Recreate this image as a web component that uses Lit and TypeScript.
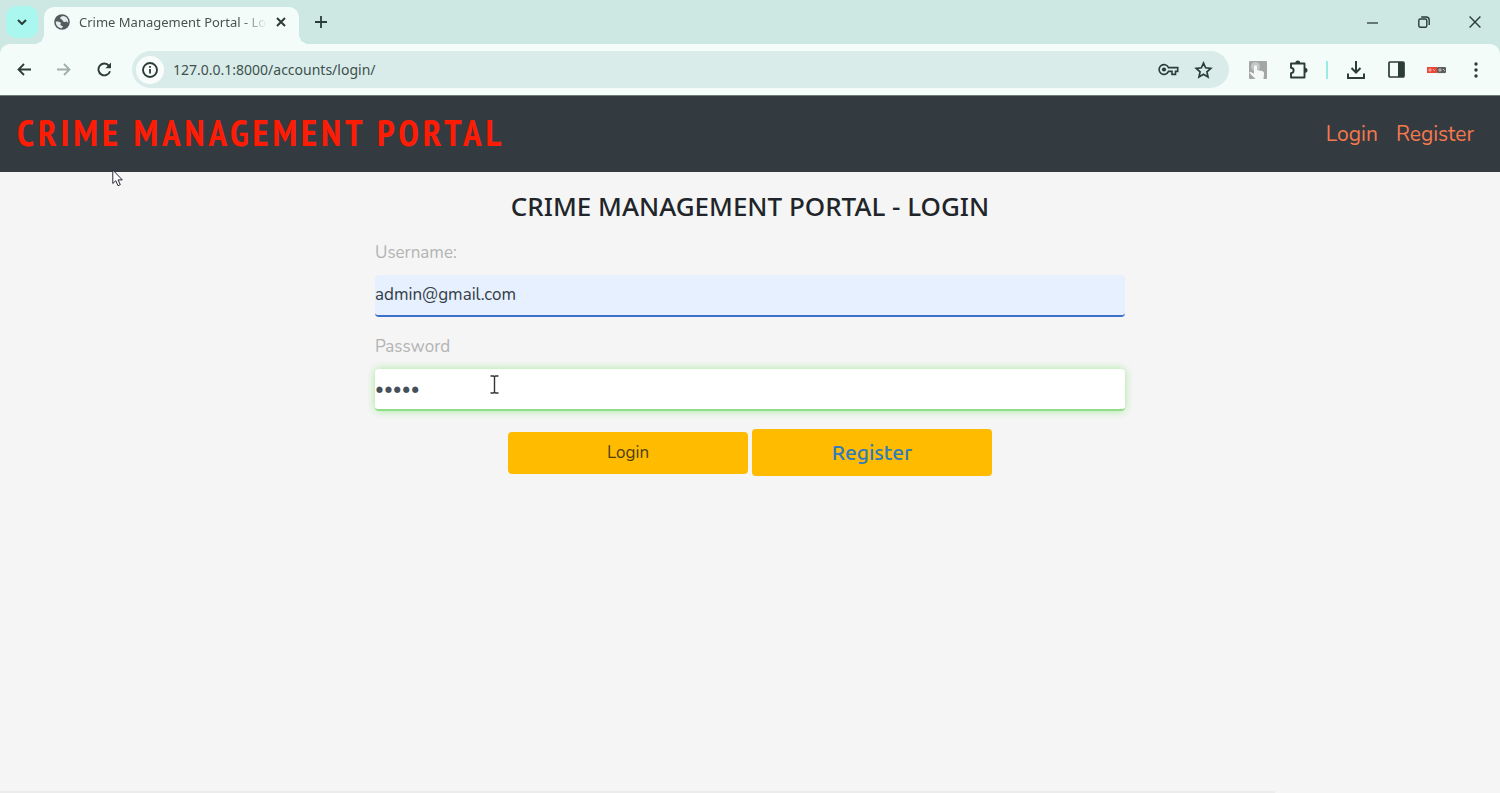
import { LitElement, html, css, svg } from "lit";
import { customElement } from "lit/decorators.js";

const icon = (w: number, h: number, body: unknown) => html`
  <svg width=${w} height=${h} viewBox="0 0 ${w} ${h}" fill="none" stroke="currentColor" stroke-width="2" aria-hidden="true">${body}</svg>`;

@customElement("browser-bar")
class BrowserBar extends LitElement {
  static styles = css`
    :host { display: block; background: #cde7e2; color: #2c3c39; font-family: "Noto Sans", sans-serif; }
    * { box-sizing: border-box; }
    button { border: 0; padding: 0; background: none; color: inherit; font: inherit; display: grid; place-items: center; flex: none; }
    svg { display: block; flex: none; }
    .strip { display: flex; align-items: center; height: 44px; padding: 0 14px 0 6px; }
    .search { width: 32px; height: 32px; border-radius: 10px; background: #a9f7ef; }
    .tab { position: relative; align-self: flex-end; display: flex; align-items: center; gap: 9px; width: 255px; height: 37px; margin-left: 6px; padding: 0 13px 7px 10px; background: #f4fcf9; border-radius: 10px 10px 0 0; }
    .tab::before, .tab::after { content: ""; position: absolute; bottom: 0; width: 10px; height: 10px; }
    .tab::before { left: -10px; background: radial-gradient(circle at 0 0, transparent 10px, #f4fcf9 10px); }
    .tab::after { right: -10px; background: radial-gradient(circle at 100% 0, transparent 10px, #f4fcf9 10px); }
    .title { flex: 1; min-width: 0; overflow: hidden; white-space: nowrap; color: #485351; font-size: 13px; line-height: 20px; mask-image: linear-gradient(90deg, #000 162px, transparent 188px); }
    .new { width: 24px; height: 24px; margin-left: 10px; }
    .window { display: flex; gap: 28px; margin-left: auto; }
    .window button { width: 23px; height: 24px; }
    .tools { display: flex; align-items: center; height: 51px; padding: 0 12px; gap: 16px; background: #f4fcf9; border-radius: 10px 10px 0 0; }
    .tools > button { width: 24px; height: 24px; }
    .dim { color: #a1afac; }
    .address { display: flex; align-items: center; flex: 1; height: 37px; margin-right: 1px; padding: 0 16px 0 4px; border-radius: 19px; background: #d9ecea; }
    .info { width: 28px; height: 28px; border-radius: 50%; background: #f8fdfc; }
    .url { flex: 1; min-width: 0; margin-left: 9px; padding: 0; border: 0; outline: 0; background: none; color: #40504d; font: 14px/20px "Noto Sans", sans-serif; }
    .key { margin-right: 15px; }
    .line { width: 2px; height: 18px; background: #98ece4; }
  `;
  render() {
    return html`
      <div class="strip">
        <button class="search" aria-label="Search tabs">${icon(10, 6, svg`<path d="M1 1l4 4 4-4"/>`)}</button>
        <div class="tab">
          ${icon(16, 16, svg`<circle cx="8" cy="8" r="7.8" fill="#535b5e" stroke="none"/><path d="M1.800 7.500c2.500 0 4.500.2 5 1.500.4 1-.8 1.200-.3 2 .5.9 2 .6 2.300 1.400.2.700-.5 1.200-1.300 1.800C4 14 1.500 11 1.800 7.500zM9 2c-1.500.5-3 1-2.800 2.200.2 1.100 1.600.7 2.200 1.700.5.9.8 2.200 2.200 2 1-.2 1.600-.8 2.400-.2.5.4.6 1.200 1.100 1.100C14.800 5.500 12.500 2.200 9 2z" fill="#e5edeb" stroke="none"/>`)}
          <span class="title">Crime Management Portal - Login</span>
          <button aria-label="Close tab">${icon(10, 10, svg`<path d="M1 1l8 8M9 1L1 9"/>`)}</button>
        </div>
        <button class="new" aria-label="New tab">${icon(12, 12, svg`<path d="M6 0v12M0 6h12" stroke-width="1.800"/>`)}</button>
        <div class="window">
          <button aria-label="Minimize">${icon(11, 11, svg`<path d="M0 6h11" stroke-width="1.300"/>`)}</button>
          <button aria-label="Restore">${icon(12, 12, svg`<rect x=".8" y="3" width="8" height="8.200" rx="1.500" stroke-width="1.400"/><path d="M3.200 1h5A3 3 0 0 1 11.200 4v5" stroke-width="1.400"/>`)}</button>
          <button aria-label="Close">${icon(12, 12, svg`<path d="M.6.6l10.800 10.800M11.400.6L.6 11.400" stroke-width="1.400"/>`)}</button>
        </div>
      </div>
      <div class="tools">
        <button aria-label="Back">${icon(14, 13, svg`<path d="M14 6.500H1.500M7 1L1.500 6.500 7 12" stroke-width="1.800"/>`)}</button>
        <button class="dim" aria-label="Forward">${icon(14, 13, svg`<path d="M0 6.500h12.500M7 1l5.500 5.500L7 12" stroke-width="1.800"/>`)}</button>
        <button aria-label="Reload">${icon(15, 15, svg`<path d="M12 3.800A5.900 5.900 0 1 0 13 9.200" stroke-width="1.900"/><path d="M14 .5v5.800H8.400z" fill="currentColor" stroke="none"/>`)}</button>
        <div class="address">
          <button class="info" aria-label="Site information">${icon(16, 16, svg`<circle cx="8" cy="8" r="7" stroke-width="1.900"/><path d="M8 7v4.500M8 4v1.800" stroke-width="1.800"/>`)}</button>
          <input class="url" aria-label="Address" value="127.0.0.1:8000/accounts/login/" />
          <button class="key" aria-label="Passwords">${icon(21, 13, svg`<path d="M10.500 4.600a4.900 4.900 0 1 0 0 3.800H14v3h3.500v-3h2.200V4.600z" stroke-width="1.600"/><circle cx="6" cy="6.500" r="2.100" fill="currentColor" stroke="none"/>`)}</button>
          <button aria-label="Bookmark">${icon(19, 18, svg`<path d="M9.500 2l2.100 4.800 5.200.5-3.900 3.500 1.100 5.100-4.500-2.700L5 15.900l1.100-5.100-3.900-3.500 5.200-.5z" stroke-width="1.700"/>`)}</button>
        </div>
        <button aria-label="Hand extension">${icon(18, 18, svg`<rect width="18" height="18" rx="1" fill="#a3a6a5" stroke="none"/><circle cx="6.500" cy="5.500" r="4.500" fill="#c3c8c6" stroke="none"/><path d="M0 11.500c2.500-.5 3.500.3 5 1.500V5.500c0-1.800 3-1.800 3 0V9l5 1c2 .5 2.300 1.500 2 3l-.5 5H6.500L3.500 15z" fill="#f4f7f6" stroke="none"/>`)}</button>
        <button aria-label="Extensions">${icon(19, 19, svg`<path d="M2 3.500h13.500V9v8.500H2v-4.300c3.500-.4 3.500-5 0-5.400z" stroke-width="1.900" stroke-linejoin="round"/><path d="M6.300 3a2.500 2.500 0 0 1 5 0zM16 7.800a2.500 2.500 0 0 1 0 5z" fill="currentColor" stroke="none"/>`)}</button>
        <span class="line"></span>
        <button aria-label="Downloads">${icon(18, 18, svg`<path d="M9 0v11.500M4.500 7L9 11.500 13.500 7M1 12.500V17h16v-4.500"/>`)}</button>
        <button aria-label="Side panel">${icon(17, 17, svg`<rect x="1" y="1" width="15" height="15" rx="1" stroke-width="1.700"/><path d="M10 1h6v15h-6z" fill="currentColor" stroke="none"/>`)}</button>
        <button aria-label="Profile">${icon(19, 8, svg`<rect width="10" height="6" y="1" fill="#ed4636" stroke="none"/><rect x="10" y="1" width="9" height="6" rx="1" fill="#58605f" stroke="none"/><path d="M2 3h2v2H2zM6 3l2 2M12 3h2v2h-2zM16 3l2 2M9 8h9" stroke="#ecc7c3" stroke-width=".8"/>`)}</button>
        <button aria-label="Menu">${icon(4, 16, svg`<g fill="currentColor" stroke="none"><circle cx="2" cy="2" r="1.700"/><circle cx="2" cy="8" r="1.700"/><circle cx="2" cy="14" r="1.700"/></g>`)}</button>
      </div>`;
  }
}

@customElement("app-root")
class AppRoot extends LitElement {
  static styles = css`
    :host { display: flex; flex-direction: column; position: relative; min-height: 100vh; background: #f5f5f5; font-family: "Noto Sans", sans-serif; }
    * { box-sizing: border-box; }
    a { text-decoration: none; }
    nav { display: flex; align-items: center; justify-content: space-between; height: 77px; padding: 0 26px 0 17px; background: #333a40; border-top: 1px solid #6c7b7a; }
    .brand { padding-bottom: 4px; color: #ff1c05; font: bold 37px/48px "PT Sans Narrow", "Open Sans Condensed", "Roboto Condensed", sans-serif; letter-spacing: 4px; }
    .links { display: flex; gap: 18px; }
    .links a { color: #f6794c; font: 21px/32px "Nunito", "Noto Sans", sans-serif; }
    main { width: 50%; margin: 0 auto; padding-top: 17px; }
    h1 { margin: 0; text-align: center; color: #212529; font: 500 26px/34px "Noto Sans", sans-serif; }
    form { display: flex; flex-direction: column; }
    label { margin-top: 18px; color: #b3b3b3; font: 17px/24px "Nunito", "Noto Sans", sans-serif; }
    .field { width: 100%; height: 42px; margin-top: 10px; padding: 0 0 2px; border: 0; border-bottom: 2px solid #3b71ca; border-radius: 4px; outline: 0; background: #e6f0fe; color: #343c46; font: 17px/24px "Nunito", "Noto Sans", sans-serif; }
    .field.secret { padding: 0; background: #fff; border-color: #90dd88; color: #45505a; box-shadow: 0 0 8px #a5e89b; }
    .actions { display: flex; justify-content: center; align-items: center; gap: 4px; margin-top: 18px; }
    .btn { width: 32%; padding: 9px 0; border: 0; border-radius: 4px; background: #ffbb00; color: #4d3d15; text-align: center; font: 17px/24px "Nunito", "Noto Sans", sans-serif; }
    .btn.alt { color: #2f7bbd; font: 500 21px/29px "Ubuntu", "Noto Sans", sans-serif; }
    .pointer, .caret { position: absolute; pointer-events: none; }
    .pointer { left: 112px; top: 169px; }
    .caret { left: 490px; top: 375px; }
    .edge { width: 85%; height: 2px; margin-top: auto; background: #ececec; }
  `;
  render() {
    return html`
      <browser-bar></browser-bar>
      <nav>
        <a class="brand" href="#">CRIME MANAGEMENT PORTAL</a>
        <div class="links"><a href="#login">Login</a><a href="#register">Register</a></div>
      </nav>
      <main>
        <h1>CRIME MANAGEMENT PORTAL - LOGIN</h1>
        <form>
          <label for="user">Username:</label>
          <input class="field" id="user" type="text" value="admin@gmail.com" />
          <label for="pass">Password</label>
          <input class="field secret" id="pass" type="password" value="admin" />
          <div class="actions">
            <button class="btn" type="button">Login</button>
            <a class="btn alt" href="#register">Register</a>
          </div>
        </form>
      </main>
      <div class="edge"></div>
      <svg class="pointer" width="12" height="18" viewBox="0 0 12 18" aria-hidden="true"><path d="M.8 1v13.500l3-2.800 2.200 5 2.300-1-2.200-4.800h4.200z" fill="#fff" stroke="#25253a"/></svg>
      <svg class="caret" width="9" height="19" viewBox="0 0 9 19" fill="none" stroke="#333" stroke-width="1.400" aria-hidden="true"><path d="M.5 1h3l1 .8 1-.8h3M4.500 1.500v16M.5 18h3l1-.8 1 .8h3"/></svg>`;
  }
}
